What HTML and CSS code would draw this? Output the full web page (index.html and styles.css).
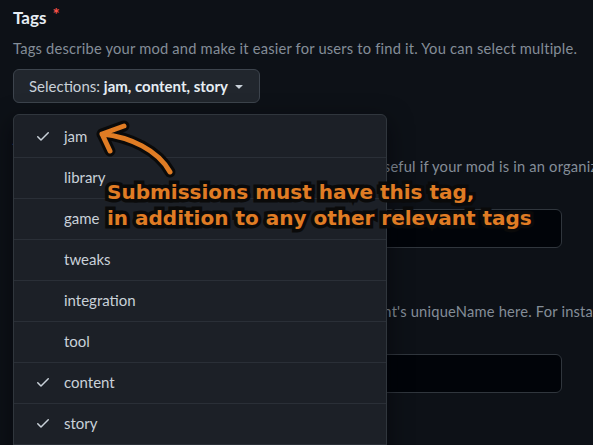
FILE: index.html
```html
<!DOCTYPE html>
<html lang="en">
<head>
<meta charset="utf-8">
<title>Tags</title>
<link rel="stylesheet" href="styles.css">
</head>
<body>
<div class="page">
  <form class="form">
    <section class="field">
      <div class="label">Tags <span class="req">*</span></div>
      <p class="desc">Tags describe your mod and make it easier for users to find it. You can select multiple.</p>
      <button type="button" class="select-btn">Selections: <b>jam, content, story</b>
        <svg class="caret" viewBox="0 0 16 16" width="16" height="16"><path d="m4.427 7.427 3.396 3.396a.25.25 0 0 0 .354 0l3.396-3.396A.25.25 0 0 0 11.396 7H4.604a.25.25 0 0 0-.177.427Z"/></svg>
      </button>
    </section>
    <section class="field">
      <div class="label">Author</div>
      <p class="desc">Optional. Your GitHub ID or organization name. This is useful if your mod is in an organization repository,<br>not a personal one.</p>
      <div class="input"></div>
    </section>
    <section class="field">
      <div class="label">Parent mod</div>
      <p class="desc">Optional. If a mod is an add-on for another, put the parent's uniqueName here. For instance, for an addon of<br>New Horizons.</p>
      <div class="input"></div>
    </section>
  </form>

  <ul class="menu">
    <li class="item"><svg class="check" viewBox="0 0 16 16" width="16" height="16"><path d="M13.78 4.22a.75.75 0 0 1 0 1.06l-7.25 7.25a.75.75 0 0 1-1.06 0L2.22 9.28a.75.75 0 0 1 1.06-1.06L6 10.94l6.72-6.72a.75.75 0 0 1 1.06 0Z"/></svg><span>jam</span></li>
    <li class="item"><span class="nocheck"></span><span>library</span></li>
    <li class="item"><span class="nocheck"></span><span>game</span></li>
    <li class="item"><span class="nocheck"></span><span>tweaks</span></li>
    <li class="item"><span class="nocheck"></span><span>integration</span></li>
    <li class="item"><span class="nocheck"></span><span>tool</span></li>
    <li class="item"><svg class="check" viewBox="0 0 16 16" width="16" height="16"><path d="M13.78 4.22a.75.75 0 0 1 0 1.06l-7.25 7.25a.75.75 0 0 1-1.06 0L2.22 9.28a.75.75 0 0 1 1.06-1.06L6 10.94l6.72-6.72a.75.75 0 0 1 1.06 0Z"/></svg><span>content</span></li>
    <li class="item"><svg class="check" viewBox="0 0 16 16" width="16" height="16"><path d="M13.78 4.22a.75.75 0 0 1 0 1.06l-7.25 7.25a.75.75 0 0 1-1.06 0L2.22 9.28a.75.75 0 0 1 1.06-1.06L6 10.94l6.72-6.72a.75.75 0 0 1 1.06 0Z"/></svg><span>story</span></li>
  </ul>

  <svg class="arrow" viewBox="0 0 593 445" width="593" height="445">
    <g fill="none" stroke-linecap="round" stroke-linejoin="round">
      <path class="arrow-outline" d="M102 134 C130 137 158 150 170 172 M102 134 L124 126 M102 134 L110 151"/>
      <path class="arrow-line" d="M102 134 C130 137 158 150 170 172 M102 134 L124 126 M102 134 L110 151"/>
    </g>
  </svg>
  <div class="note">Submissions must have this tag,<br>in addition to any other relevant tags</div>
</div>
</body>
</html>
```
FILE: styles.css
```css
html, body {
  margin: 0;
  padding: 0;
  background: #0d1117;
}
body {
  font-family: Lato, "Noto Sans", sans-serif;
  color: #c9d1d9;
}
.page {
  position: relative;
  width: 593px;
  height: 445px;
  overflow: hidden;
  box-sizing: border-box;
  padding: 6px 13px 0;
}
.form {
  display: flex;
  flex-direction: column;
  gap: 24px;
}
.field {
  display: flex;
  flex-direction: column;
  align-items: flex-start;
}
.label {
  font-size: 17px;
  line-height: 24px;
  font-weight: 700;
  color: #e6edf3;
}
.req {
  color: #f85149;
  font-size: 17px;
  line-height: 0;
  vertical-align: 3px;
  margin-left: 2px;
}
.desc {
  margin: 5px 0 0;
  font-size: 14.7px;
  line-height: 20px;
  letter-spacing: 0.2px;
  color: #848d97;
  white-space: nowrap;
}
.field:first-child .desc {
  margin-top: 8px;
}
.select-btn {
  margin-top: 11px;
  height: 34px;
  box-sizing: border-box;
  display: flex;
  align-items: center;
  padding: 0 0 0 15px;
  width: 247px;
  background: #21262d;
  border: 1px solid #3d444d;
  border-radius: 6px;
  font-family: inherit;
  font-size: 15px;
  color: #c9d1d9;
  white-space: pre;
}
.select-btn b {
  font-weight: 700;
  color: #e6edf3;
}
.caret {
  fill: #c9d1d9;
  margin-left: 3px;
}
.input {
  margin-top: 13px;
  width: 549px;
  height: 39px;
  box-sizing: border-box;
  background: #010409;
  border: 1px solid #30363d;
  border-radius: 6px;
}
.menu {
  position: absolute;
  left: 13px;
  top: 114px;
  width: 374px;
  height: 360px;
  box-sizing: border-box;
  margin: 0;
  padding: 2px 0 0;
  list-style: none;
  background: #1c2027;
  border: 1px solid #30363d;
  border-radius: 6px;
  box-shadow: 0 8px 24px rgba(1, 4, 9, 0.6);
}
.item {
  display: flex;
  align-items: center;
  gap: 13px;
  padding-left: 21px;
  padding-bottom: 2px;
  box-sizing: border-box;
  height: 41px;
  border-bottom: 1px solid #2a2f37;
  font-size: 15px;
  color: #c9d1d9;
}
.check {
  fill: #c9d1d9;
  flex: none;
}
.nocheck {
  width: 16px;
  height: 16px;
  flex: none;
}
.arrow {
  position: absolute;
  left: 0;
  top: 0;
  pointer-events: none;
}
.arrow-outline {
  stroke: #0a0a0a;
  stroke-width: 11;
}
.arrow-line {
  stroke: #e07c24;
  stroke-width: 5;
}
.note {
  position: absolute;
  left: 107px;
  top: 179px;
  font-family: "DejaVu Sans", sans-serif;
  font-weight: 700;
  font-size: 20px;
  line-height: 26px;
  color: #e07c24;
  -webkit-text-stroke: 7px #0a0a0a;
  paint-order: stroke fill;
  white-space: nowrap;
}
```
